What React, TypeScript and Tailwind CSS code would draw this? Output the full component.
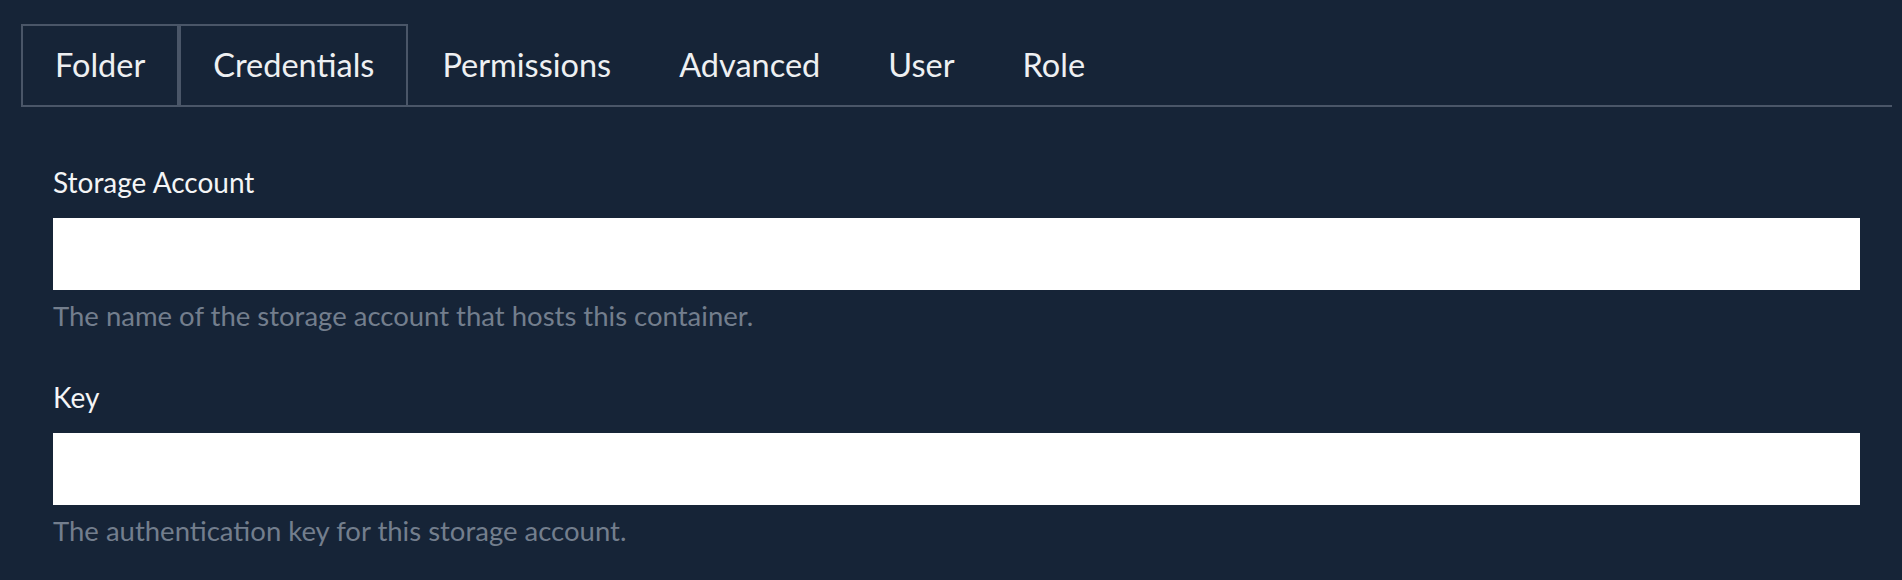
import React from "react";

const tabs = [
  { label: "Folder", boxed: true },
  { label: "Credentials", boxed: true },
  { label: "Permissions", boxed: false },
  { label: "Advanced", boxed: false },
  { label: "User", boxed: false },
  { label: "Role", boxed: false },
];

const fields = [
  { label: "Storage Account", help: "The name of the storage account that hosts this container." },
  { label: "Key", help: "The authentication key for this storage account." },
];

export default function App() {
  return (
    <div
      className="w-[1902px] h-[580px] bg-[#162437] overflow-hidden"
      style={{ fontFamily: "Lato, 'Noto Sans', sans-serif" }}
    >
      {/* Tab strip */}
      <div className="pt-[24px] pl-[21px] pr-[10px]">
        <div className="flex border-b-2 border-[#4a5668]">
          {tabs.map((tab) => (
            <div
              key={tab.label}
              className={`h-[83px] -mb-[2px] px-[32px] flex items-center text-[32.5px] text-[#eef0f2] ${
                tab.boxed ? "border-2 border-[#4a5668]" : "border-2 border-transparent"
              }`}
            >
              {tab.label}
            </div>
          ))}
        </div>
      </div>

      {/* Fields */}
      <div className="pl-[53px] pr-[42px] pt-[55px] flex flex-col gap-[43px]">
        {fields.map((f) => (
          <div key={f.label} className="flex flex-col">
            <label className="text-[28px] leading-[40px] text-[#f4f5f6]">{f.label}</label>
            <input className="mt-[16px] h-[72px] w-full bg-white outline-none border-0" />
            <p className="mt-[8px] text-[27.5px] leading-[36px] text-[#737e8d]">{f.help}</p>
          </div>
        ))}
      </div>
    </div>
  );
}
